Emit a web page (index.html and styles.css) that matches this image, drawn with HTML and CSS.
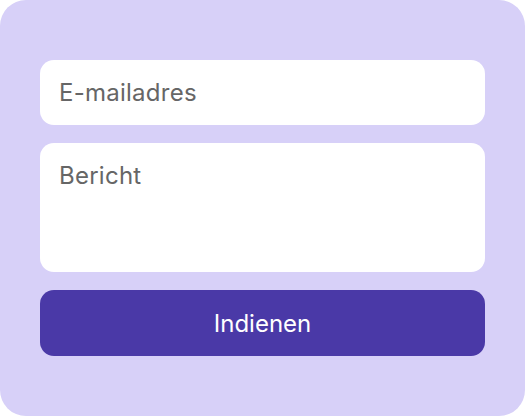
FILE: index.html
```html
<!DOCTYPE html>
<html lang="nl">
<head>
<meta charset="utf-8">
<link rel="stylesheet" href="styles.css">
</head>
<body>
<form class="card">
  <div class="field field-email">E-mailadres</div>
  <div class="field field-message">Bericht</div>
  <button type="button" class="submit">Indienen</button>
</form>
</body>
</html>
```
FILE: styles.css
```css
html, body {
  margin: 0;
  padding: 0;
  background: #ffffff;
}
body {
  width: 526px;
  height: 416px;
  font-family: Inter, "Noto Sans", sans-serif;
}
.card {
  box-sizing: border-box;
  width: 525px;
  height: 416px;
  margin: 0;
  padding: 60px 40px 60px 40px;
  background: #d7d0f8;
  border-radius: 26px;
  display: flex;
  flex-direction: column;
  gap: 18px;
}
.field {
  box-sizing: border-box;
  background: #ffffff;
  border-radius: 14px;
  padding: 0 19px;
  color: #666666;
  font-size: 24px;
  line-height: 30px;
  letter-spacing: 0.25px;
}
.field-email {
  height: 65px;
  display: flex;
  align-items: center;
}
.field-message {
  height: 129px;
  padding-top: 18px;
}
.submit {
  height: 66px;
  border: 0;
  border-radius: 14px;
  background: #4a39a7;
  color: #ffffff;
  font-family: inherit;
  font-size: 24px;
  padding: 0;
}
```
